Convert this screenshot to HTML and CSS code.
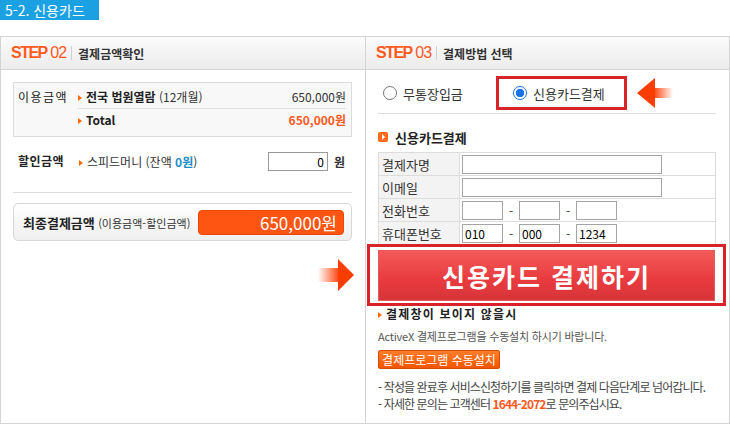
FILE: index.html
```html
<!DOCTYPE html>
<html lang="ko">
<head>
    <meta charset="UTF-8">
    <meta name="viewport" content="width=device-width, initial-scale=1.0">
    <title>5-2. 신용카드</title>
    <link rel="stylesheet" href="styles.css">
</head>
<body>
    <h2 class="tab">5-2. 신용카드</h2>

    <div class="steps">
        <section class="step step-amount">
            <div class="step-head">
                <span class="step-no"><b>STEP</b> 02</span>
                <span class="step-title">결제금액확인</span>
            </div>
            <div class="step-body">
                <div class="amount-box">
                    <div class="amount-label">이용금액</div>
                    <ul class="amount-list">
                        <li><span class="bullet"><b>전국 법원열람</b> (12개월)</span><span class="price">650,000원</span></li>
                        <li class="total"><span class="bullet"><b>Total</b></span><span class="price">650,000원</span></li>
                    </ul>
                </div>
                <div class="discount">
                    <span class="amount-label strong">할인금액</span>
                    <span class="bullet">스피드머니 (잔액 <b class="blue">0원</b>)</span>
                    <input class="discount-input" type="text" value="0">
                    <span class="won">원</span>
                </div>
                <div class="final">
                    <span class="final-label"><b>최종결제금액</b> <small>(이용금액-할인금액)</small></span>
                    <span class="final-price">650,000원</span>
                </div>
            </div>
        </section>

        <section class="step step-pay">
            <div class="step-head">
                <span class="step-no"><b>STEP</b> 03</span>
                <span class="step-title">결제방법 선택</span>
            </div>
            <div class="step-body">
                <div class="methods">
                    <label class="method"><input type="radio" name="method"> 무통장입금</label>
                    <label class="method method-on"><input type="radio" name="method" checked> 신용카드결제</label>
                </div>
                <svg class="arrow arrow-left" width="36" height="32" viewBox="0 0 36 32">
                    <defs>
                        <linearGradient id="tailL" x1="0" x2="1" y1="0" y2="0">
                            <stop offset="0" stop-color="#fb3d02"/>
                            <stop offset="1" stop-color="#fb3d02" stop-opacity="0"/>
                        </linearGradient>
                    </defs>
                    <rect x="16" y="11" width="20" height="10" fill="url(#tailL)"/>
                    <polygon points="0,16 18,1 18,31" fill="#fb3d02"/>
                </svg>

                <h3 class="card-title"><span class="icon-play"></span>신용카드결제</h3>
                <table class="card-form">
                    <tr>
                        <th>결제자명</th>
                        <td><input class="field" type="text"></td>
                    </tr>
                    <tr>
                        <th>이메일</th>
                        <td><input class="field" type="text"></td>
                    </tr>
                    <tr>
                        <th>전화번호</th>
                        <td><input class="field short" type="text"><span class="dash">-</span><input class="field short" type="text"><span class="dash">-</span><input class="field short" type="text"></td>
                    </tr>
                    <tr>
                        <th>휴대폰번호</th>
                        <td><input class="field short" type="text" value="010"><span class="dash">-</span><input class="field short" type="text" value="000"><span class="dash">-</span><input class="field short" type="text" value="1234"></td>
                    </tr>
                </table>

                <div class="pay-box">
                    <button class="btn-pay">신용카드 결제하기</button>
                    <svg class="arrow arrow-right" width="36" height="32" viewBox="0 0 36 32">
                        <defs>
                            <linearGradient id="tailR" x1="1" x2="0" y1="0" y2="0">
                                <stop offset="0" stop-color="#fb3d02"/>
                                <stop offset="1" stop-color="#fb3d02" stop-opacity="0"/>
                            </linearGradient>
                        </defs>
                        <rect x="0" y="9" width="22" height="14" fill="url(#tailR)"/>
                        <polygon points="36,16 20,0 20,32" fill="#fb3d02"/>
                    </svg>
                </div>

                <p class="notice bullet"><b>결제창이 보이지 않을시</b></p>
                <p class="notice-sub">ActiveX 결제프로그램을 수동설치 하시기 바랍니다.</p>
                <button class="btn-install">결제프로그램 수동설치</button>
                <ul class="notes">
                    <li>- 작성을 완료후 서비스신청하기를 클릭하면 결제 다음단계로 넘어갑니다.</li>
                    <li>- 자세한 문의는 고객센터 <b class="orange">1644-2072</b>로 문의주십시요.</li>
                </ul>
            </div>
        </section>
    </div>
</body>
</html>
```

FILE: styles.css
```css
body {
    margin: 0;
    padding: 0;
    font-family: "Noto Sans CJK KR", "Noto Sans", sans-serif;
    font-size: 12px;
    color: #333;
    background-color: #fff;
}
.tab {
    display: inline-block;
    margin: 0 0 16px;
    padding: 0 0 0 5px;
    width: 94px;
    height: 20px;
    line-height: 20px;
    font-size: 14px;
    font-weight: normal;
    color: #fff;
    background-color: #1ba1e2;
}
.steps {
    display: flex;
    width: 730px;
    height: 388px;
    box-sizing: border-box;
    border: 1px solid #d4d4d4;
}
.step {
    position: relative;
}
.step-amount {
    width: 364px;
    border-right: 1px solid #d4d4d4;
}
.step-pay {
    flex: 1;
}
.step-head {
    display: flex;
    align-items: center;
    height: 32px;
    padding-left: 10px;
    border-bottom: 1px solid #d4d4d4;
    background: linear-gradient(#fbfbfb, #ececec);
}
.step-no {
    font-family: "Liberation Sans", Arial, sans-serif;
    font-size: 16px;
    letter-spacing: -1px;
    color: #ff5a1e;
    padding-right: 5px;
    border-right: 1px solid #d0d0d0;
    line-height: 14px;
}
.step-no b {
    letter-spacing: -1.5px;
}
.step-title {
    padding-left: 6px;
    font-size: 12px;
    font-weight: bold;
    color: #333;
}
.step-amount .step-body {
    padding: 12px 13px 0 12px;
}
.step-pay .step-body {
    padding: 0 13px 0 12px;
}
.bullet::before {
    content: "";
    display: inline-block;
    margin-right: 4px;
    border-left: 4px solid #ff6a00;
    border-top: 3px solid transparent;
    border-bottom: 3px solid transparent;
    vertical-align: 1px;
}
.amount-box {
    display: flex;
    padding: 3px 0 5px;
    border: 1px solid #dcdcdc;
    background-color: #f8f8f8;
}
.amount-label {
    width: 60px;
    padding-left: 4px;
    line-height: 22px;
    font-size: 12px;
    letter-spacing: 1.5px;
    color: #222;
}
.amount-list {
    flex: 1;
    margin: 0 5px 0 0;
    padding: 0;
    list-style: none;
}
.amount-list li {
    display: flex;
    justify-content: space-between;
    height: 22px;
    line-height: 22px;
}
.amount-list li:first-child {
    border-bottom: 1px solid #e0e0e0;
}
.amount-list b {
    color: #222;
}
.total .price {
    font-weight: bold;
    color: #ff5a1e;
}
.discount {
    display: flex;
    align-items: center;
    height: 22px;
    margin-top: 13px;
    padding-bottom: 20px;
    border-bottom: 1px solid #ddd;
}
.discount .amount-label {
    width: 61px;
    padding-left: 5px;
    letter-spacing: 0.5px;
}
.strong {
    font-weight: bold;
}
.blue {
    color: #1a8ccc;
}
.discount-input {
    width: 60px;
    height: 19px;
    box-sizing: border-box;
    margin-left: auto;
    padding: 0 3px;
    border: 1px solid #999;
    font-family: inherit;
    font-size: 12px;
    text-align: right;
}
.won {
    margin: 0 7px 0 6px;
    font-weight: bold;
}
.final {
    display: flex;
    align-items: center;
    height: 36px;
    margin-top: 10px;
    padding: 0 7px 0 9px;
    border: 1px solid #d8d8d8;
    border-radius: 5px;
    background: linear-gradient(#fff, #efefef);
}
.final-label b {
    font-size: 13px;
    color: #222;
}
.final-label small {
    font-size: 11px;
}
.final-price {
    width: 146px;
    height: 25px;
    margin-left: auto;
    box-sizing: border-box;
    padding-right: 6px;
    line-height: 24px;
    text-align: right;
    font-size: 17px;
    color: #fff;
    border: 1px solid #e84800;
    border-radius: 4px;
    background-color: #ff5512;
}
.methods {
    display: flex;
    align-items: center;
    height: 34px;
    margin-top: 6px;
    padding-bottom: 3px;
    border-bottom: 1px solid #ddd;
}
.method {
    display: flex;
    align-items: center;
    font-size: 13px;
    color: #333;
}
.method:first-child {
    width: 113px;
    padding-left: 5px;
}
.method-on {
    width: 111px;
    height: 28px;
    padding-left: 14px;
    border: 3px solid #d8232a;
}
.method input {
    appearance: none;
    width: 14px;
    height: 14px;
    margin: 0 6px 0 0;
    border: 1px solid #767676;
    border-radius: 50%;
    background-color: #fff;
}
.method input:checked {
    border-color: #1a73e8;
    background: radial-gradient(circle, #1a73e8 0 4px, #fff 4.5px);
}
.arrow {
    position: absolute;
}
.arrow-left {
    left: 271px;
    top: 40px;
}
.card-title {
    display: flex;
    align-items: center;
    margin: 16px 0 8px;
    height: 14px;
    font-size: 13px;
    color: #222;
}
.icon-play {
    position: relative;
    width: 10px;
    height: 10px;
    margin-right: 7px;
    border-radius: 2px;
    background-color: #ff6a1a;
}
.icon-play::after {
    content: "";
    position: absolute;
    left: 4px;
    top: 2px;
    border-left: 3px solid #fff;
    border-top: 3px solid transparent;
    border-bottom: 3px solid transparent;
}
.card-form {
    width: 100%;
    border-collapse: collapse;
}
.card-form th,
.card-form td {
    height: 22px;
    padding: 0;
    border: 1px solid #ddd;
}
.card-form th {
    width: 77px;
    padding-left: 3px;
    text-align: left;
    font-size: 13px;
    font-weight: normal;
    background-color: #f3f3f3;
}
.card-form td {
    padding-left: 2px;
}
.field {
    display: inline-block;
    vertical-align: middle;
    width: 200px;
    height: 19px;
    box-sizing: border-box;
    padding: 0 2px;
    border: 1px solid #a5a5a5;
    font-family: inherit;
    font-size: 12px;
}
.field.short {
    width: 41px;
}
.dash {
    display: inline-block;
    width: 16px;
    text-align: center;
    vertical-align: middle;
}
.pay-box {
    position: relative;
    margin: -1px -10px 0 -11px;
    padding: 3px 8px 2px;
    border: 3px solid #d8232a;
}
.btn-pay {
    display: block;
    width: 100%;
    height: 51px;
    border: 1px solid #e25b5b;
    font-family: inherit;
    font-size: 25px;
    font-weight: bold;
    letter-spacing: 2px;
    color: #fff;
    background: linear-gradient(#f25a58, #e83a3f 60%, #d63539);
    cursor: pointer;
}
.arrow-right {
    left: -52px;
    top: 12px;
}
.notice {
    margin: 0;
    line-height: 16px;
    letter-spacing: 1.2px;
    color: #222;
}
.notice-sub {
    margin: 6px 0 0;
    line-height: 16px;
    font-size: 11px;
    letter-spacing: -0.2px;
    color: #555;
}
.btn-install {
    display: block;
    margin-top: 6px;
    width: 122px;
    height: 19px;
    padding: 0;
    border: 1px solid #d84a00;
    border-radius: 2px;
    font-family: inherit;
    font-size: 12px;
    color: #fff;
    background: linear-gradient(#ff7d2a, #f25500);
}
.notes {
    margin: 9px 0 0;
    padding: 0;
    list-style: none;
    line-height: 17px;
    font-size: 12px;
    letter-spacing: -0.9px;
    white-space: nowrap;
    color: #444;
}
.orange {
    color: #ff5a1e;
}
```
